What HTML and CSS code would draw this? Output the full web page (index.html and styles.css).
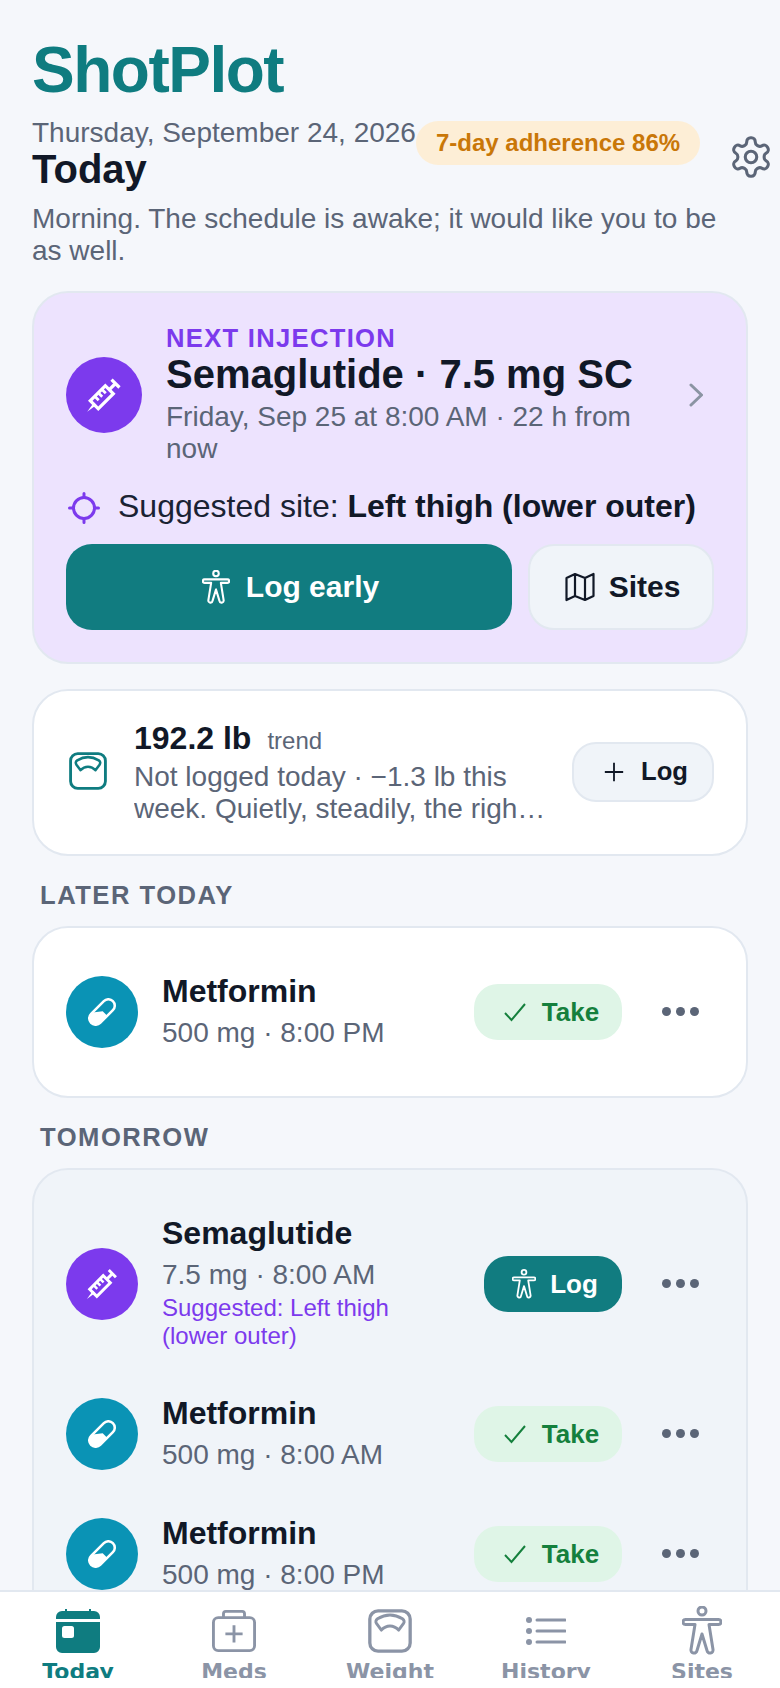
FILE: index.html
```html
<!DOCTYPE html>
<html lang="en">
<head>
<meta charset="utf-8">
<title>ShotPlot</title>
<link rel="stylesheet" href="styles.css">
</head>
<body>
<svg class="defs" width="0" height="0" aria-hidden="true">
  <symbol id="syringe" viewBox="0 0 32 32">
    <g transform="rotate(-45 16 16)" fill="none" stroke="currentColor" stroke-width="2.600">
      <path d="M-3 16 L6 14.600 V17.400 Z" fill="currentColor" stroke="none"/>
      <path d="M5 11.500 H22 V20.500 H5 Z"/>
      <path d="M10 11.500 V16 M14 11.500 V16 M18 11.500 V16" stroke-width="2.200"/>
      <path d="M22 16 H29 M29 11.500 V20.500"/>
    </g>
  </symbol>
  <symbol id="pill" viewBox="0 0 28 28">
    <g transform="rotate(-45 14 14)">
      <rect x="-1.400" y="7.600" width="30.800" height="12.800" rx="6.400" fill="none" stroke="currentColor" stroke-width="2.500"/>
      <path d="M7 7.600 L15 14 V20.400 H5 A6.400 6.400 0 0 1 5 7.600 Z" fill="currentColor"/>
    </g>
  </symbol>
  <symbol id="person" viewBox="0 0 40 49">
    <circle cx="20" cy="5" r="4" fill="none" stroke="currentColor" stroke-width="3"/>
    <path d="M3.500 13.500 H36.500 a2.500 2.500 0 0 1 0 5 H27 L31 43.500 a3 3 0 0 1 -6 1 L20 28 L15 44.500 a3 3 0 0 1 -6 -1 L13 18.500 H3.500 a2.500 2.500 0 0 1 0 -5 Z" fill="none" stroke="currentColor" stroke-width="3" stroke-linejoin="round"/>
  </symbol>
  <symbol id="scale" viewBox="0 0 24 24">
    <rect x="1" y="1" width="22" height="22" rx="4.500" fill="none" stroke="currentColor" stroke-width="1.800"/>
    <path d="M7.300 11.500 L4.700 8 C4 7 4.200 6 5.200 5.300 C9.500 2.700 14.500 2.700 18.800 5.300 C19.800 6 20 7 19.300 8 L16.700 11.500 C14 8.500 10 8.500 7.300 11.500 Z" fill="none" stroke="currentColor" stroke-width="1.600" stroke-linejoin="round"/>
  </symbol>
</svg>
<div class="app">
  <main class="content">
    <h1 class="brand">ShotPlot</h1>
    <header class="head">
      <div class="head-text">
        <div class="date">Thursday, September 24, 2026</div>
        <h2 class="today">Today</h2>
      </div>
      <div class="badge">7-day adherence 86%</div>
      <svg class="gear" viewBox="0 0 24 24" fill="none" stroke="currentColor" stroke-width="1.600" stroke-linecap="round" stroke-linejoin="round"><path d="M12.220 2h-.44a2 2 0 0 0-2 2v.18a2 2 0 0 1-1 1.730l-.43.25a2 2 0 0 1-2 0l-.15-.08a2 2 0 0 0-2.730.73l-.22.38a2 2 0 0 0 .73 2.730l.15.1a2 2 0 0 1 1 1.720v.51a2 2 0 0 1-1 1.740l-.15.09a2 2 0 0 0-.73 2.730l.22.38a2 2 0 0 0 2.730.73l.15-.08a2 2 0 0 1 2 0l.43.25a2 2 0 0 1 1 1.730V20a2 2 0 0 0 2 2h.44a2 2 0 0 0 2-2v-.18a2 2 0 0 1 1-1.730l.43-.25a2 2 0 0 1 2 0l.15.08a2 2 0 0 0 2.730-.73l.22-.39a2 2 0 0 0-.73-2.730l-.15-.08a2 2 0 0 1-1-1.740v-.5a2 2 0 0 1 1-1.740l.15-.09a2 2 0 0 0 .73-2.730l-.22-.38a2 2 0 0 0-2.730-.73l-.15.08a2 2 0 0 1-2 0l-.43-.25a2 2 0 0 1-1-1.730V4a2 2 0 0 0-2-2z"/><circle cx="12" cy="12" r="3"/></svg>
    </header>
    <p class="greeting">Morning. The schedule is awake; it would like you to be as well.</p>

    <section class="hero">
      <div class="hero-top">
        <div class="disc disc-lg disc-purple"><svg class="ic-syringe-lg"><use href="#syringe"/></svg></div>
        <div class="hero-text">
          <div class="eyebrow">NEXT INJECTION</div>
          <div class="hero-title">Semaglutide · 7.5 mg SC</div>
          <div class="hero-sub">Friday, Sep 25 at 8:00 AM · 22 h from now</div>
        </div>
        <svg class="chev" viewBox="0 0 14 24" fill="none" stroke="currentColor" stroke-width="3" stroke-linecap="round" stroke-linejoin="round"><path d="M2 2 L12.500 12 L2 22"/></svg>
      </div>
      <div class="site">
        <svg class="target" viewBox="0 0 32 32" fill="none" stroke="currentColor" stroke-width="3" stroke-linecap="round"><circle cx="16" cy="16" r="10.500"/><path d="M16 1.500 V5.500 M16 26.500 V30.500 M1.500 16 H5.500 M26.500 16 H30.500"/></svg>
        <span>Suggested site: <b>Left thigh (lower outer)</b></span>
      </div>
      <div class="hero-actions">
        <button class="btn btn-primary"><svg class="ic-person-btn"><use href="#person"/></svg>Log early</button>
        <button class="btn btn-ghost"><svg class="ic-map" viewBox="0 0 30 30" fill="none" stroke="currentColor" stroke-width="2.200" stroke-linejoin="round"><path d="M1.500 6 L10 2 L20 6 L28.500 2 V24 L20 28 L10 24 L1.500 28 Z M10 2 V24 M20 6 V28"/></svg>Sites</button>
      </div>
    </section>

    <section class="card weight">
      <svg class="ic-scale"><use href="#scale"/></svg>
      <div class="weight-text">
        <div class="weight-val"><b>192.2 lb</b><span>trend</span></div>
        <div class="weight-sub">Not logged today · −1.3 lb this week. Quietly, steadily, the right direction, no drama at all.</div>
      </div>
      <button class="btn-log"><svg class="ic-plus" viewBox="0 0 24 24" fill="none" stroke="currentColor" stroke-width="2"><path d="M12 2 V22 M2 12 H22"/></svg>Log</button>
    </section>

    <h3 class="label">LATER TODAY</h3>
    <section class="card rows">
      <div class="row">
        <div class="disc disc-teal"><svg class="ic-pill"><use href="#pill"/></svg></div>
        <div class="row-text"><div class="name">Metformin</div><div class="sub">500 mg · 8:00 PM</div></div>
        <button class="pill pill-take"><svg class="ic-check" viewBox="0 0 24 20" fill="none" stroke="currentColor" stroke-width="2"><path d="M2 11 L8.500 18 L22 2"/></svg>Take</button>
        <div class="dots"><i></i><i></i><i></i></div>
      </div>
    </section>

    <h3 class="label">TOMORROW</h3>
    <section class="card rows rows-muted">
      <div class="row">
        <div class="disc disc-purple"><svg class="ic-syringe"><use href="#syringe"/></svg></div>
        <div class="row-text"><div class="name">Semaglutide</div><div class="sub">7.5 mg · 8:00 AM</div><div class="hint">Suggested: Left thigh (lower outer)</div></div>
        <button class="pill pill-log"><svg class="ic-person-pill"><use href="#person"/></svg>Log</button>
        <div class="dots"><i></i><i></i><i></i></div>
      </div>
      <div class="row">
        <div class="disc disc-teal"><svg class="ic-pill"><use href="#pill"/></svg></div>
        <div class="row-text"><div class="name">Metformin</div><div class="sub">500 mg · 8:00 AM</div></div>
        <button class="pill pill-take"><svg class="ic-check" viewBox="0 0 24 20" fill="none" stroke="currentColor" stroke-width="2"><path d="M2 11 L8.500 18 L22 2"/></svg>Take</button>
        <div class="dots"><i></i><i></i><i></i></div>
      </div>
      <div class="row">
        <div class="disc disc-teal"><svg class="ic-pill"><use href="#pill"/></svg></div>
        <div class="row-text"><div class="name">Metformin</div><div class="sub">500 mg · 8:00 PM</div></div>
        <button class="pill pill-take"><svg class="ic-check" viewBox="0 0 24 20" fill="none" stroke="currentColor" stroke-width="2"><path d="M2 11 L8.500 18 L22 2"/></svg>Take</button>
        <div class="dots"><i></i><i></i><i></i></div>
      </div>
    </section>
  </main>

  <nav class="tabs">
    <a class="tab tab-on">
      <svg class="tab-ic" viewBox="0 0 44 44"><path d="M9 0 H11 V2 H33 V0 H35 V2 H38 A6 6 0 0 1 44 8 V10 H0 V8 A6 6 0 0 1 6 2 H9 Z M0 13 H44 V38 A6 6 0 0 1 38 44 H6 A6 6 0 0 1 0 38 Z" fill="currentColor"/><rect x="6" y="17" width="12" height="12" rx="2.500" fill="#fff"/></svg>
      <span>Today</span>
    </a>
    <a class="tab">
      <svg class="tab-ic" viewBox="0 0 46 44" fill="none" stroke="currentColor" stroke-width="3" stroke-linejoin="round"><rect x="1.500" y="8" width="43" height="34.500" rx="5"/><path d="M12 8 V4 A2.500 2.500 0 0 1 14.500 1.500 H31.500 A2.500 2.500 0 0 1 34 4 V8 M23 16 V34 M14 25 H32"/></svg>
      <span>Meds</span>
    </a>
    <a class="tab">
      <svg class="tab-ic"><use href="#scale"/></svg>
      <span>Weight</span>
    </a>
    <a class="tab">
      <svg class="tab-ic-list" viewBox="0 0 40 28" fill="none" stroke="currentColor" stroke-width="3" stroke-linecap="round"><path d="M11 3 H39 M11 14 H39 M11 25 H39"/><g fill="currentColor" stroke="none"><circle cx="3" cy="3" r="3"/><circle cx="3" cy="14" r="3"/><circle cx="3" cy="25" r="3"/></g></svg>
      <span>History</span>
    </a>
    <a class="tab">
      <svg class="tab-ic-person"><use href="#person"/></svg>
      <span>Sites</span>
    </a>
  </nav>
</div>
</body>
</html>
```
FILE: styles.css
```css
* { box-sizing: border-box; }
html, body { margin: 0; padding: 0; }
body {
  width: 780px;
  height: 1688px;
  overflow: hidden;
  background: #f5f7fb;
  font-family: "Liberation Sans", Arial, sans-serif;
  color: #111827;
}
.defs { position: absolute; }
svg { display: block; flex: none; }
.app { display: flex; flex-direction: column; height: 1688px; }
.content { flex: 1; min-height: 0; overflow: hidden; padding: 32px 32px 0; }

.brand {
  margin: 0 0 10px;
  font-size: 64px;
  line-height: 76px;
  font-weight: 700;
  letter-spacing: -1.500px;
  color: #0f7c80;
}
.head { display: flex; align-items: center; }
.head-text { flex: none; }
.date { font-size: 28px; line-height: 30px; color: #5b6577; }
.today { margin: 0; font-size: 40px; line-height: 42px; font-weight: 700; color: #111827; }
.badge {
  flex: none;
  margin-bottom: 22px;
  padding: 0 20px;
  height: 44px;
  line-height: 44px;
  border-radius: 22px;
  background: #fdeed6;
  color: #c97708;
  font-size: 24px;
  font-weight: 700;
}
.gear { width: 46px; height: 46px; margin: 6px 0 0 28px; color: #5b6577; }
.greeting { margin: 13px 0 0; font-size: 28px; line-height: 32px; color: #5b6577; }

.hero {
  margin-top: 24px;
  padding: 32px;
  border: 2px solid #e2e8f0;
  border-radius: 36px;
  background: #ede3fe;
}
.hero-top { display: flex; align-items: center; gap: 24px; }
.hero-text { flex: 1; min-width: 0; }
.eyebrow { font-size: 25.600px; line-height: 26px; font-weight: 700; letter-spacing: 1.300px; color: #7c3aed; }
.hero-title { font-size: 40px; line-height: 46px; font-weight: 700; }
.hero-sub { margin-top: 4px; font-size: 28px; line-height: 32px; color: #5b6577; }
.chev { width: 14px; height: 24px; margin-right: 11px; color: #8b94a3; }
.site { display: flex; align-items: center; gap: 18px; margin-top: 23px; font-size: 32px; line-height: 36px; color: #1a2233; }
.site b { color: #111827; }
.target { width: 32px; height: 32px; margin: 4px 0 0 2px; color: #7c3aed; }
.hero-actions { display: flex; gap: 16px; margin-top: 20px; }
.btn {
  display: flex; align-items: center; justify-content: center;
  height: 86px;
  font-family: inherit;
  font-size: 30px;
  font-weight: 700;
  border-radius: 26px;
  padding: 0 0 0 3px;
}
.btn-primary { flex: 1; gap: 16px; border: 0; background: #117c80; color: #fff; }
.btn-ghost { width: 186px; gap: 14px; border: 2px solid #e2e8f0; background: #f0f4f9; color: #111827; }
.ic-person-btn { width: 28px; height: 34px; }
.ic-map { width: 30px; height: 30px; }
.ic-syringe-lg { width: 40px; height: 40px; }

.card { border: 2px solid #e2e8f0; border-radius: 36px; background: #fff; }
.weight { display: flex; align-items: center; margin-top: 25px; height: 167px; padding: 0 32px; }
.ic-scale { width: 38px; height: 38px; margin: 0 27px 4px 3px; color: #0f7c80; }
.weight-text { flex: 1; min-width: 0; }
.weight-val { line-height: 34px; }
.weight-val b { font-size: 32px; }
.weight-val span { margin-left: 16px; font-size: 24px; color: #5b6577; }
.weight-sub {
  font-size: 28px; line-height: 32px; color: #5b6577;
  display: -webkit-box; -webkit-line-clamp: 2; -webkit-box-orient: vertical; overflow: hidden;
}
.btn-log {
  flex: none;
  display: flex; align-items: center; gap: 16px;
  margin: 0 0 2px 24px;
  width: 142px; height: 60px;
  padding: 0 0 0 29px;
  border: 2px solid #e2e8f0;
  border-radius: 24px;
  background: #f0f4f9;
  font-family: inherit; font-size: 25.600px; font-weight: 700; color: #111827;
}
.ic-plus { width: 22px; height: 22px; }

.label { margin: 24px 0 16px 8px; font-size: 25.600px; line-height: 30px; font-weight: 700; letter-spacing: 1.500px; color: #5b6577; }
.rows { display: flex; flex-direction: column; gap: 22px; padding: 35px 32px; }
.rows-muted { background: #f0f4f9; }
.row { display: flex; align-items: center; gap: 24px; padding: 8px 0; }
.disc { flex: none; display: flex; align-items: center; justify-content: center; width: 72px; height: 72px; border-radius: 50%; color: #fff; }
.disc-lg { width: 76px; height: 76px; }
.disc-purple { background: #7c3aed; }
.disc-teal { background: #0a93b5; }
.ic-pill { width: 28px; height: 28px; }
.ic-syringe { width: 36px; height: 36px; }
.row-text { flex: 1; min-width: 0; padding: 1px 0 1px; }
.name { font-size: 32px; line-height: 38px; font-weight: 700; }
.sub { margin-top: 4px; font-size: 28px; line-height: 38px; color: #5b6577; }
.hint { margin-bottom: 4px; font-size: 24px; line-height: 28px; color: #7c3aed; }
.pill {
  flex: none;
  display: flex; align-items: center; justify-content: center;
  height: 56px;
  border: 0;
  border-radius: 24px;
  font-family: inherit; font-size: 26px; font-weight: 700;
}
.pill-take { width: 148px; gap: 15px; padding: 0 0 0 6px; background: #dff5e7; color: #15803d; }
.pill-log { width: 138px; gap: 14px; padding: 0 0 0 4px; background: #117c80; color: #fff; }
.ic-check { width: 24px; height: 20px; }
.ic-person-pill { width: 24px; height: 30px; }
.dots { flex: none; display: flex; justify-content: center; gap: 5px; width: 68px; margin-bottom: 2px; }
.dots i { width: 9px; height: 9px; border-radius: 50%; background: #5b6577; }

.tabs {
  flex: none;
  display: grid;
  grid-template-columns: repeat(5, 1fr);
  height: 98px;
  padding: 17px 0 0;
  border-top: 2px solid #e2e8f0;
  background: #fff;
}
.tab { display: flex; flex-direction: column; align-items: center; color: #8b94a6; }
.tab-on { color: #0f7c80; }
.tab-ic { width: 44px; height: 44px; }
.tab-ic-list { width: 40px; height: 28px; margin: 8px 0; }
.tab-ic-person { width: 40px; height: 49px; margin: -3px 0 -2px; }
.tab span {
  display: block;
  height: 19px;
  overflow: hidden;
  margin-top: 6px;
  font-family: "DejaVu Sans", sans-serif;
  font-size: 22px;
  line-height: 26px;
  font-weight: 700;
}
```
